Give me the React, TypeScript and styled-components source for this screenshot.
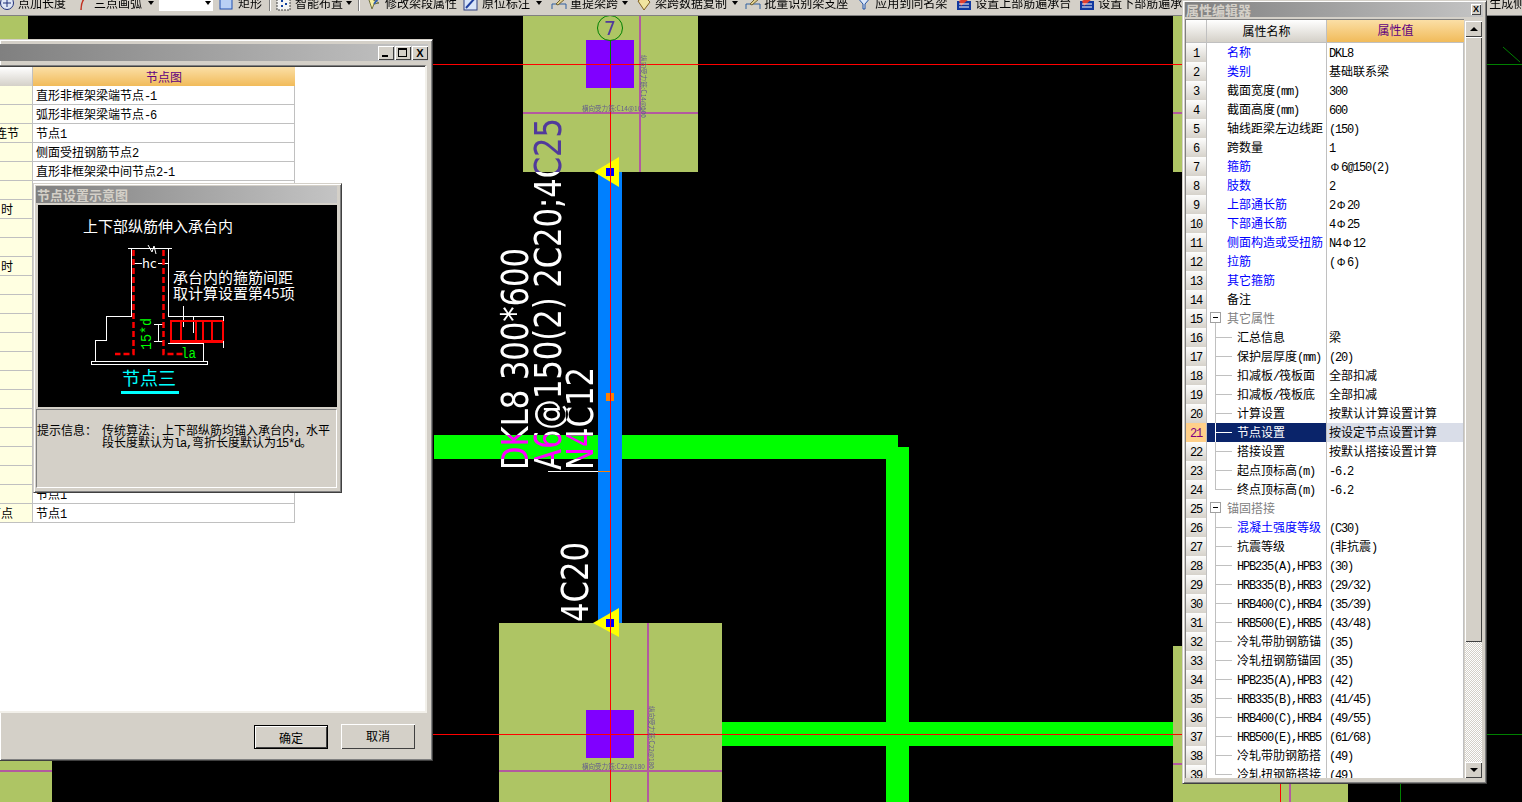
import React from 'react'
import styled, { createGlobalStyle } from 'styled-components'

const CJK = '"Noto Sans CJK SC", "Liberation Sans", sans-serif'
const FACE = '#d4d0c8'
const GRID = '#c0c0c0'

const GlobalStyle = createGlobalStyle`
    html, body {
        margin: 0;
        padding: 0;
        background: #000;
        overflow: hidden;
    }
    * {
        box-sizing: border-box;
    }
`

const Screen = styled.div`
    position: relative;
    width: 1522px;
    height: 802px;
    overflow: hidden;
    background: #000;
    font: 12px/18px ${CJK};
    color: #000;
`

/* ---------- text helper: half width latin runs like the bitmap font ---------- */

const Latin = styled.span`
    font-family: "Liberation Mono", monospace;
    font-size: 12px;
    letter-spacing: -1.2px;
`

const RebarMark = styled.span`
    display: inline-block;
    width: 12px;
    text-align: center;
    font-family: "Liberation Sans", sans-serif;
    font-size: 11px;
`

function mixed(text: string) {
    const runs = text.match(/[\x00-\x7f]+|Φ|[^\x00-\x7fΦ]+/g) || []
    return runs.map((run, i) => {
        if (run === 'Φ') return <RebarMark key={i}>Φ</RebarMark>
        if (/^[\x00-\x7f]/.test(run)) return <Latin key={i}>{run}</Latin>
        return <span key={i}>{run}</span>
    })
}

/* ---------- toolbar ---------- */

const Toolbar = styled.div`
    position: absolute;
    top: 0;
    left: 0;
    width: 1522px;
    height: 16px;
    background: ${FACE};
    border-bottom: 1px solid #808080;
    overflow: hidden;
`

const ToolRow = styled.div`
    display: flex;
    align-items: center;
    height: 17px;
    margin-top: -6px;
    white-space: nowrap;
`

const ToolItem = styled.div<{ $gap: number }>`
    display: flex;
    align-items: center;
    flex: none;
    margin-left: ${({ $gap }) => $gap}px;
`

const ToolLabel = styled.span`
    margin-left: 3px;
`

const ToolArrow = styled.span<{ $gap: number }>`
    flex: none;
    width: 0;
    height: 0;
    margin-left: ${({ $gap }) => $gap + 1}px;
    margin-right: 1px;
    border-left: 3px solid transparent;
    border-right: 3px solid transparent;
    border-top: 4px solid #000;
`

const ToolSep = styled.div<{ $gap: number }>`
    flex: none;
    width: 2px;
    height: 17px;
    margin-left: ${({ $gap }) => $gap}px;
    border-left: 1px solid #808080;
    border-right: 1px solid #fff;
`

const ToolCombo = styled.div`
    flex: none;
    position: relative;
    width: 54px;
    height: 17px;
    margin-left: 4px;
    background: #fff;
    &::after {
        content: '';
        position: absolute;
        right: 2px;
        top: 7px;
        border-left: 3px solid transparent;
        border-right: 3px solid transparent;
        border-top: 4px solid #000;
    }
`

function ToolIcon({ kind }: { kind: string }) {
    const body: Record<string, React.ReactNode> = {
        plus: (
            <>
                <circle cx="8" cy="8" r="6.5" fill="#dfe6f5" stroke="#20307a" />
                <path d="M8 4v8M4 8h8" stroke="#20307a" />
            </>
        ),
        arc: <path d="M11 2C7 5 6 9 6 15" fill="none" stroke="#c03020" strokeWidth="1.5" />,
        rect: <rect x="1" y="2" width="12" height="12" fill="#b8d0f4" stroke="#2050b0" />,
        grid: (
            <>
                <rect x="1" y="2" width="13" height="13" fill="#f4f4f4" stroke="#404040" strokeDasharray="2 1" />
                <path d="M5 5h2v2H5zM9 8h2v2H9zM5 10h2v2H5z" fill="#1040a0" />
            </>
        ),
        pencil: (
            <>
                <path d="M2 2l4 12 2-5 5-1z" fill="#f8f0a0" stroke="#707040" />
                <path d="M8 9l6-8" stroke="#3060b0" strokeWidth="2" />
            </>
        ),
        mark: (
            <>
                <rect x="1" y="2" width="13" height="13" fill="#d8e4f8" stroke="#304080" />
                <path d="M3 13l9-10" stroke="#2040a0" strokeWidth="2" />
            </>
        ),
        span: (
            <>
                <path d="M1 14V9h14v5" fill="none" stroke="#3060a0" />
                <path d="M5 9l7-7 2 2-7 6z" fill="#e0d090" stroke="#706030" />
            </>
        ),
        copy: <path d="M2 6l6-5 6 6-6 8z" fill="#f0e4a0" stroke="#806020" />,
        funnel: (
            <>
                <path d="M1 2h14l-6 7v5H7V9z" fill="#dce8fa" stroke="#2050a0" />
                <path d="M5 4h6" stroke="#fff" />
            </>
        ),
        rebar: (
            <>
                <rect x="1" y="6" width="14" height="9" fill="#1038a0" />
                <path d="M3 6l9-5 2 2-9 8z" fill="#e04030" />
                <path d="M3 9h10M3 12h10" stroke="#fff" />
            </>
        ),
    }
    return (
        <svg width="16" height="16" viewBox="0 0 16 16" style={{ flex: 'none' }}>
            {body[kind]}
        </svg>
    )
}

type ToolDef = { gap: number; icon: string; label: string; arrow?: number }

const TOOLS_A: ToolDef[] = [
    { gap: -1, icon: 'plus', label: '点加长度' },
    { gap: 9, icon: 'arc', label: '三点画弧', arrow: 5 },
]
const TOOLS_D: ToolDef[] = [
    { gap: 6, icon: 'pencil', label: '修改梁段属性' },
    { gap: 6, icon: 'mark', label: '原位标注', arrow: 5 },
    { gap: 8, icon: 'span', label: '重提梁跨', arrow: 3 },
    { gap: 7, icon: 'copy', label: '梁跨数据复制', arrow: 4 },
    { gap: 6, icon: 'span', label: '批量识别梁支座' },
    { gap: 8, icon: 'funnel', label: '应用到同名梁' },
    { gap: 9, icon: 'rebar', label: '设置上部筋遍承台' },
    { gap: 8, icon: 'rebar', label: '设置下部筋遍承台' },
]

function renderTools(list: ToolDef[]) {
    return list.map(t => (
        <ToolItem $gap={t.gap} key={t.label}>
            <ToolIcon kind={t.icon} />
            <ToolLabel>{t.label}</ToolLabel>
            {t.arrow !== undefined && <ToolArrow $gap={t.arrow} />}
        </ToolItem>
    ))
}

function TopToolbar() {
    return (
        <Toolbar>
            <ToolRow>
                {renderTools(TOOLS_A)}
                <ToolCombo />
                <ToolItem $gap={6}>
                    <ToolIcon kind="rect" />
                    <ToolLabel>矩形</ToolLabel>
                </ToolItem>
                <ToolSep $gap={7} />
                <ToolItem $gap={5}>
                    <ToolIcon kind="grid" />
                    <ToolLabel>智能布置</ToolLabel>
                    <ToolArrow $gap={2} />
                </ToolItem>
                <ToolSep $gap={5} />
                {renderTools(TOOLS_D)}
                <ToolItem $gap={295}>
                    <span>生成侧面筋</span>
                </ToolItem>
            </ToolRow>
        </Toolbar>
    )
}

/* ---------- CAD canvas ---------- */

const CadSvg = styled.svg`
    position: absolute;
    left: 0;
    top: 0;
    display: block;
`

const InvertText = styled.text`
    font-family: "DejaVu Sans", sans-serif;
    font-size: 37px;
    fill: #fff;
    mix-blend-mode: difference;
`

const InvertLine = styled.rect`
    fill: #fff;
    mix-blend-mode: difference;
`

const TinyText = styled.text`
    font-family: ${CJK};
    font-size: 7px;
    fill: #66608c;
`

const PAD = '#aec564'
const PURPLE_LINE = '#b35aa0'
const COLUMN = '#8000ff'
const GREEN = '#00ff00'
const DARK_GREEN = '#008000'

function Canvas() {
    return (
        <CadSvg width="1522" height="802" viewBox="0 0 1522 802" shapeRendering="crispEdges">
            {/* pads */}
            <rect x="0" y="16" width="28" height="40" fill={PAD} />
            <rect x="0" y="640" width="52" height="162" fill={PAD} />
            <rect x="0" y="770" width="52" height="2" fill={PURPLE_LINE} />
            <rect x="523" y="16" width="175" height="156" fill={PAD} />
            <rect x="499" y="623" width="223" height="179" fill={PAD} />
            <rect x="1173" y="16" width="60" height="156" fill={PAD} />
            <rect x="1173" y="646" width="175" height="156" fill={PAD} />

            {/* pad axes */}
            <rect x="523" y="112" width="175" height="2" fill={PURPLE_LINE} />
            <rect x="639" y="16" width="2" height="156" fill={PURPLE_LINE} />
            <rect x="499" y="770" width="223" height="2" fill={PURPLE_LINE} />
            <rect x="647" y="623" width="2" height="179" fill={PURPLE_LINE} />
            <rect x="1173" y="112" width="60" height="2" fill={PURPLE_LINE} />
            <rect x="1173" y="763" width="175" height="2" fill={PURPLE_LINE} />
            <rect x="1289" y="646" width="2" height="156" fill={PURPLE_LINE} />

            {/* columns */}
            <rect x="586" y="40" width="48" height="48" fill={COLUMN} />
            <rect x="586" y="710" width="48" height="48" fill={COLUMN} />

            {/* green beams */}
            <rect x="434" y="435" width="464" height="24" fill={GREEN} />
            <rect x="886" y="447" width="23" height="355" fill={GREEN} />
            <rect x="722" y="722" width="451" height="24" fill={GREEN} />

            {/* selected beam */}
            <rect x="598" y="172" width="24" height="451" fill="#0080ff" />

            {/* grips */}
            <path d="M594 172L619 157V187Z" fill="#ffff00" shapeRendering="auto" />
            <path d="M593 623L619 608V637Z" fill="#ffff00" shapeRendering="auto" />
            <rect x="606" y="168" width="8" height="8" fill="#0000ff" />
            <rect x="606" y="619" width="8" height="8" fill="#0000ff" />
            <rect x="606" y="393" width="8" height="8" fill="#ff7f00" />

            {/* axis lines */}
            <rect x="610" y="64" width="1" height="738" fill="#ff0000" />
            <rect x="432" y="64" width="750" height="1" fill="#ff0000" />
            <rect x="432" y="734" width="750" height="1" fill="#ff0000" />
            <rect x="1280" y="782" width="1" height="20" fill="#ff0000" />
            <rect x="610" y="40" width="1" height="24" fill={DARK_GREEN} />

            {/* thin layer on the right */}
            <rect x="1487" y="64" width="35" height="1" fill={DARK_GREEN} />
            <rect x="1487" y="734" width="35" height="1" fill={DARK_GREEN} />
            <rect x="1400" y="782" width="1" height="20" fill={DARK_GREEN} />
            <path d="M1503 47L1520 62" stroke={DARK_GREEN} fill="none" shapeRendering="auto" />

            {/* axis bubble */}
            <circle cx="610" cy="28" r="12.5" fill="none" stroke={DARK_GREEN} shapeRendering="auto" />
            <InvertText x="604" y="35" style={{ fontSize: 19 }} textLength="12" lengthAdjust="spacingAndGlyphs">
                7
            </InvertText>

            {/* pad notes */}
            <TinyText x="582" y="111" textLength="63" lengthAdjust="spacingAndGlyphs">
                横向受力筋:C14@100
            </TinyText>
            <TinyText transform="translate(641 55) rotate(90)" textLength="63" lengthAdjust="spacingAndGlyphs">
                纵向受力筋:C14@100
            </TinyText>
            <TinyText x="582" y="769" textLength="63" lengthAdjust="spacingAndGlyphs">
                横向受力筋:C22@180
            </TinyText>
            <TinyText transform="translate(649 706) rotate(90)" textLength="63" lengthAdjust="spacingAndGlyphs">
                纵向受力筋:C22@180
            </TinyText>

            {/* beam annotation */}
            <InvertLine x="548" y="471" width="62" height="1" />
            <InvertText transform="translate(528 470) rotate(-90)" textLength="222" lengthAdjust="spacingAndGlyphs">
                DKL8 300*600
            </InvertText>
            <InvertText transform="translate(561 470) rotate(-90)" textLength="352" lengthAdjust="spacingAndGlyphs">
                A6@150(2) 2C20;4C25
            </InvertText>
            <InvertText transform="translate(593 470) rotate(-90)" textLength="103" lengthAdjust="spacingAndGlyphs">
                N4C12
            </InvertText>
            <InvertText transform="translate(588 622) rotate(-90)" textLength="80" lengthAdjust="spacingAndGlyphs">
                4C20
            </InvertText>
        </CadSvg>
    )
}

/* ---------- window chrome ---------- */

const Win = styled.div`
    background: ${FACE};
    border-top: 1px solid ${FACE};
    border-left: 1px solid ${FACE};
    border-right: 1px solid #404040;
    border-bottom: 1px solid #404040;
    box-shadow: inset 1px 1px 0 #fff, inset -1px -1px 0 #808080;
    display: flex;
    flex-direction: column;
`

const TitleBar = styled.div`
    flex: none;
    display: flex;
    align-items: center;
    justify-content: space-between;
    height: 17px;
    padding: 0 1px;
    background: linear-gradient(to right, #808080, #c4c4c4);
    color: ${FACE};
    font-weight: 700;
    font-size: 13px;
    line-height: 17px;
`

const DialogTitle = styled(TitleBar)`
    padding: 0;
`

const PropTitle = styled(TitleBar)`
    height: 15px;
    line-height: 15px;
    padding: 0 3px 0 1px;
`

const CaptionButtons = styled.div`
    display: flex;
    margin-left: auto;
`

const CaptionButton = styled.div<{ $gap?: number }>`
    width: 16px;
    height: 14px;
    margin-left: ${({ $gap }) => $gap || 0}px;
    background: ${FACE};
    box-shadow: inset 1px 1px 0 #fff, inset -1px -1px 0 #404040;
    color: #000;
    font: 700 11px/14px "Liberation Sans", sans-serif;
    text-align: center;
`

const MinGlyph = styled.span`
    display: block;
    width: 6px;
    height: 2px;
    margin: 9px 0 0 4px;
    background: #000;
`

const MaxGlyph = styled.span`
    display: block;
    width: 9px;
    height: 9px;
    margin: 2px 0 0 3px;
    border: 1px solid #000;
    border-top-width: 2px;
`

/* ---------- node settings dialog ---------- */

const NodeDialog = styled(Win)`
    position: absolute;
    left: 0;
    top: 39px;
    width: 433px;
    height: 722px;
    border-left: none;
    padding: 4px 4px 0 0;
`

const NodeBody = styled.div`
    flex: none;
    width: 427px;
    height: 648px;
    margin-top: 4px;
    background: #fff;
    border-top: 1px solid #808080;
    border-right: 2px solid #f2f0ea;
    border-bottom: 2px solid #f2f0ea;
    box-shadow: inset 0 1px 0 #404040;
    padding-top: 1px;
`

const NodeGrid = styled.div`
    width: 295px;
`

const NodeRow = styled.div`
    display: grid;
    grid-template-columns: 33px 262px;
    height: 19px;
`

const NodeSide = styled.div<{ $inset?: number }>`
    display: flex;
    justify-content: flex-end;
    padding-right: ${({ $inset }) => $inset || 0}px;
    background: #ffffe1;
    border-right: 1px solid ${GRID};
    border-bottom: 1px solid ${GRID};
    white-space: nowrap;
    overflow: hidden;
`

const NodeSideHead = styled.div`
    background: linear-gradient(#fff, ${FACE});
    border-right: 1px solid ${GRID};
`

const NodeValue = styled.div`
    padding-left: 3px;
    border-right: 1px solid ${GRID};
    border-bottom: 1px solid ${GRID};
    white-space: nowrap;
    overflow: hidden;
`

const OrangeHead = styled.div`
    background: linear-gradient(#fbdfa6, #f1bb5a);
    color: #600080;
    text-align: center;
    line-height: 19px;
`

const Footer = styled.div`
    flex: 1;
    display: flex;
    align-items: center;
    justify-content: flex-end;
    gap: 13px;
    padding-right: 13px;
`

const DialogButton = styled.div<{ $default?: boolean }>`
    width: 74px;
    height: ${({ $default }) => ($default ? 24 : 25)}px;
    background: ${FACE};
    border: ${({ $default }) => ($default ? '1px solid #000' : 'none')};
    box-shadow: inset 1px 1px 0 #fff, inset -1px -1px 0 #404040;
    line-height: 24px;
    text-align: center;
`

const NODE_VALUES = [
    '直形非框架梁端节点-1',
    '弧形非框架梁端节点-6',
    '节点1',
    '侧面受扭钢筋节点2',
    '直形非框架梁中间节点2-1',
]

const NODE_SIDES: Record<number, { text: string; inset: number }> = {
    2: { text: '连节', inset: 13 },
    6: { text: '时', inset: 19 },
    9: { text: '时', inset: 19 },
    22: { text: '节点', inset: 19 },
}

function NodeSettings() {
    return (
        <NodeDialog>
            <DialogTitle>
                <CaptionButtons>
                    <CaptionButton>
                        <MinGlyph />
                    </CaptionButton>
                    <CaptionButton $gap={1}>
                        <MaxGlyph />
                    </CaptionButton>
                    <CaptionButton $gap={1}>X</CaptionButton>
                </CaptionButtons>
            </DialogTitle>
            <NodeBody>
                <NodeGrid>
                    <NodeRow>
                        <NodeSideHead />
                        <OrangeHead>节点图</OrangeHead>
                    </NodeRow>
                    {Array.from({ length: 23 }, (_, i) => (
                        <NodeRow key={i}>
                            <NodeSide $inset={NODE_SIDES[i] ? NODE_SIDES[i].inset : 0}>
                                {NODE_SIDES[i] ? NODE_SIDES[i].text : ''}
                            </NodeSide>
                            <NodeValue>{mixed(NODE_VALUES[i] || '节点1')}</NodeValue>
                        </NodeRow>
                    ))}
                </NodeGrid>
            </NodeBody>
            <Footer>
                <DialogButton $default>确定</DialogButton>
                <DialogButton>取消</DialogButton>
            </Footer>
        </NodeDialog>
    )
}

/* ---------- node sketch window ---------- */

const SketchWindow = styled(Win)`
    position: absolute;
    left: 33px;
    top: 183px;
    width: 309px;
    height: 310px;
    padding: 2px 4px 4px 2px;
`

const SketchPicture = styled.div`
    flex: none;
    width: 299px;
    height: 202px;
    margin: 2px 0 0 2px;
    background: #000;
`

const SketchSvg = styled.svg`
    display: block;
`

const SketchText = styled.text<{ $size?: number }>`
    font-family: ${CJK};
    font-size: ${({ $size }) => $size || 15}px;
    fill: #fff;
`

const SketchLatin = styled.text`
    font-family: "Liberation Mono", monospace;
    font-size: 14px;
    fill: #00ff00;
`

const HintPanel = styled.div`
    flex: 1;
    display: flex;
    margin-top: 2px;
    padding: 14px 0 0 0;
    border: 1px solid #808080;
    border-right-color: #fff;
    border-bottom-color: #fff;
    line-height: 12px;
`

const HintLabel = styled.div`
    flex: none;
    width: 65px;
`

const HintBody = styled.div`
    width: 232px;
`

function NodeSketch() {
    const white = '#fff'
    const red = '#ff0000'
    return (
        <SketchWindow>
            <TitleBar>节点设置示意图</TitleBar>
            <SketchPicture>
                <SketchSvg width="299" height="202" viewBox="38 205 299 202">
                    <SketchText x="83" y="232">
                        上下部纵筋伸入承台内
                    </SketchText>
                    <g fill="none" stroke={white} shapeRendering="crispEdges">
                        <path d="M128 248.5H172M131.5 248V316.5H106.5V340.5H95.5V362M168.5 248V316.5H223" />
                        <rect x="91.5" y="361.5" width="116" height="3" />
                        <path d="M203.5 341V361M168 343.5H203M183.5 306V327M193.5 316V333" />
                        <path d="M158.5 324V341M154 324H163M154 341H163M223.5 316V348M203 341H223" />
                        <path d="M134 263.5H142M158 263.5H168" />
                    </g>
                    <path d="M148 245L152 252L154 246L156 254" fill="none" stroke={white} />
                    <path d="M133.5 250V354H115M163.5 250V354H183" fill="none" stroke={red} strokeWidth="2.5" strokeDasharray="6 3" />
                    <g fill="none" stroke={red} shapeRendering="crispEdges">
                        <path d="M170 320.5H223" strokeWidth="2" />
                        <path d="M170 341H223" strokeWidth="3" />
                        <path d="M171 321V341M181 321V341M196 321V341M203 321V341M212 321V341M223 321V341" strokeWidth="2" />
                    </g>
                    <SketchText x="142" y="268" $size={13}>
                        hc
                    </SketchText>
                    <SketchText x="173" y="282.5">
                        承台内的箍筋间距
                    </SketchText>
                    <SketchText x="173" y="299">
                        取计算设置第45项
                    </SketchText>
                    <SketchLatin transform="translate(151 350) rotate(-90)" textLength="32" lengthAdjust="spacingAndGlyphs">
                        15*d
                    </SketchLatin>
                    <SketchLatin x="181" y="358" textLength="15" lengthAdjust="spacingAndGlyphs">
                        la
                    </SketchLatin>
                    <SketchText x="122" y="385" $size={18} style={{ fill: '#00ffff' }}>
                        节点三
                    </SketchText>
                    <rect x="121" y="391" width="58" height="3" fill="#00ffff" />
                </SketchSvg>
            </SketchPicture>
            <HintPanel>
                <HintLabel>{'提示信息\uFF1A'}</HintLabel>
                <HintBody>
                    {'传统算法\uFF1A上下部纵筋均锚入承台内\uFF0C水平'}
                    <br />
                    {mixed('段长度默认为la,弯折长度默认为15*d。')}
                </HintBody>
            </HintPanel>
        </SketchWindow>
    )
}

/* ---------- property editor ---------- */

const PropWindow = styled(Win)`
    position: absolute;
    left: 1182px;
    top: 0;
    width: 305px;
    height: 784px;
    padding: 1px 3px 3px 2px;
`

const CloseButton = styled.div`
    flex: none;
    width: 10px;
    height: 11px;
    margin-right: -1px;
    background: ${FACE};
    box-shadow: inset 1px 1px 0 #fff, inset -1px -1px 0 #404040;
    color: #000;
    font: 700 9px/11px "Liberation Sans", sans-serif;
    text-align: center;
`

const PropBody = styled.div`
    flex: none;
    display: flex;
    height: 759px;
    margin-top: 2px;
    gap: 1px;
`

const PropTable = styled.div`
    flex: none;
    width: 279px;
    height: 759px;
    background: #fff;
    border-left: 1px solid #808080;
    border-top: 1px solid #808080;
    overflow: hidden;
`

const PropHead = styled.div`
    display: grid;
    grid-template-columns: 21px 120px 137px;
    height: 23px;
    border-bottom: 1px solid ${GRID};
    line-height: 22px;
    text-align: center;
`

const HeadCell = styled.div`
    background: linear-gradient(#fff, ${FACE});
    border-right: 1px solid ${GRID};
`

const PropRow = styled.div`
    display: grid;
    grid-template-columns: 21px 120px 137px;
    height: 19px;
`

const IndexCell = styled.div<{ $on?: boolean }>`
    background: ${({ $on }) => ($on ? '#ffd08a' : `linear-gradient(#fdfdfc, ${FACE})`)};
    color: ${({ $on }) => ($on ? '#800080' : '#000')};
    border-bottom: 1px solid ${GRID};
    border-right: 1px solid ${GRID};
    text-align: center;
`

type Tree = 'top' | 'child' | 'last' | 'section'

const NameCell = styled.div<{ $tree: Tree; $on?: boolean; $tone: string }>`
    position: relative;
    padding-left: ${({ $tree }) => ($tree === 'child' || $tree === 'last' ? 30 : 20)}px;
    color: ${({ $tone, $on }) => ($on ? '#fff' : $tone)};
    background: ${({ $on }) => ($on ? '#0a246a' : '#fff')};
    border-bottom: 1px solid ${GRID};
    border-right: 1px solid ${GRID};
    white-space: nowrap;
    overflow: hidden;
    &::before {
        content: '';
        display: ${({ $tree }) => ($tree === 'top' ? 'none' : 'block')};
        position: absolute;
        left: 8px;
        top: ${({ $tree }) => ($tree === 'section' ? 13 : 0)}px;
        height: ${({ $tree }) => ($tree === 'last' ? 9 : 19)}px;
        border-left: 1px solid ${({ $on }) => ($on ? '#fff' : GRID)};
    }
    &::after {
        content: '';
        display: ${({ $tree }) => ($tree === 'child' || $tree === 'last' ? 'block' : 'none')};
        position: absolute;
        left: 8px;
        top: 9px;
        width: 17px;
        border-top: 1px solid ${({ $on }) => ($on ? '#fff' : GRID)};
    }
`

const Expander = styled.span`
    position: absolute;
    left: 3px;
    top: 3px;
    width: 11px;
    height: 11px;
    background: #fff;
    border: 1px solid #a0a0a0;
    &::after {
        content: '';
        position: absolute;
        left: 2px;
        top: 4px;
        width: 5px;
        height: 1px;
        background: #000;
    }
`

const ValueCell = styled.div<{ $on?: boolean }>`
    padding-left: 2px;
    background: ${({ $on }) => ($on ? '#d9dde8' : '#fff')};
    border-bottom: 1px solid ${GRID};
    border-right: 1px solid ${GRID};
    white-space: nowrap;
    overflow: hidden;
`

const ScrollBar = styled.div`
    flex: none;
    display: flex;
    flex-direction: column;
    width: 17px;
    height: 759px;
    padding-top: 2px;
`

const ScrollButton = styled.div<{ $down?: boolean }>`
    flex: none;
    display: flex;
    align-items: center;
    justify-content: center;
    height: 16px;
    background: ${FACE};
    box-shadow: inset 1px 1px 0 #fff, inset -1px -1px 0 #404040;
    &::after {
        content: '';
        border-left: 4px solid transparent;
        border-right: 4px solid transparent;
        ${({ $down }) => ($down ? 'border-top: 4px solid #000;' : 'border-bottom: 4px solid #000;')}
    }
`

const ScrollThumb = styled.div`
    flex: none;
    height: 605px;
    background: ${FACE};
    box-shadow: inset 1px 1px 0 #fff, inset -1px -1px 0 #404040;
`

const ScrollTrack = styled.div`
    flex: 1;
    background: repeating-conic-gradient(#fff 0 25%, ${FACE} 0 50%) 0 0 / 2px 2px;
`

const BLUE = '#0000ff'
const BLACK = '#000'
const GRAY = '#808080'

type PropDef = [string, string, string?, Tree?]

const PROPS: PropDef[] = [
    ['名称', 'DKL8', BLUE],
    ['类别', '基础联系梁', BLUE],
    ['截面宽度(mm)', '300'],
    ['截面高度(mm)', '600'],
    ['轴线距梁左边线距', ' (150)'],
    ['跨数量', '1'],
    ['箍筋', ' Φ6@150(2)', BLUE],
    ['肢数', '2', BLUE],
    ['上部通长筋', '2Φ20', BLUE],
    ['下部通长筋', '4Φ25', BLUE],
    ['侧面构造或受扭筋', 'N4Φ12', BLUE],
    ['拉筋', ' (Φ6)', BLUE],
    ['其它箍筋', '', BLUE],
    ['备注', ''],
    ['其它属性', '', GRAY, 'section'],
    ['汇总信息', '梁', BLACK, 'child'],
    ['保护层厚度(mm)', '(20)', BLACK, 'child'],
    ['扣减板/筏板面', '全部扣减', BLACK, 'child'],
    ['扣减板/筏板底', '全部扣减', BLACK, 'child'],
    ['计算设置', '按默认计算设置计算', BLACK, 'child'],
    ['节点设置', '按设定节点设置计算', BLACK, 'child'],
    ['搭接设置', '按默认搭接设置计算', BLACK, 'child'],
    ['起点顶标高(m)', '-6.2', BLACK, 'child'],
    ['终点顶标高(m)', '-6.2', BLACK, 'last'],
    ['锚固搭接', '', GRAY, 'section'],
    ['混凝土强度等级', '(C30)', BLUE, 'child'],
    ['抗震等级', '(非抗震)', BLACK, 'child'],
    ['HPB235(A),HPB3', '(30)', BLACK, 'child'],
    ['HRB335(B),HRB3', '(29/32)', BLACK, 'child'],
    ['HRB400(C),HRB4', '(35/39)', BLACK, 'child'],
    ['HRB500(E),HRB5', '(43/48)', BLACK, 'child'],
    ['冷轧带肋钢筋锚', '(35)', BLACK, 'child'],
    ['冷轧扭钢筋锚固', '(35)', BLACK, 'child'],
    ['HPB235(A),HPB3', '(42)', BLACK, 'child'],
    ['HRB335(B),HRB3', '(41/45)', BLACK, 'child'],
    ['HRB400(C),HRB4', '(49/55)', BLACK, 'child'],
    ['HRB500(E),HRB5', '(61/68)', BLACK, 'child'],
    ['冷轧带肋钢筋搭', '(49)', BLACK, 'child'],
    ['冷轧扭钢筋搭接', '(49)', BLACK, 'last'],
]

function PropertyEditor() {
    return (
        <PropWindow>
            <PropTitle>
                属性编辑器
                <CloseButton>X</CloseButton>
            </PropTitle>
            <PropBody>
                <PropTable>
                    <PropHead>
                        <HeadCell />
                        <HeadCell>属性名称</HeadCell>
                        <OrangeHead>属性值</OrangeHead>
                    </PropHead>
                    {PROPS.map(([name, value, tone, tree], i) => {
                        const on = i === 20
                        return (
                            <PropRow key={i}>
                                <IndexCell $on={on}>{mixed(String(i + 1))}</IndexCell>
                                <NameCell $tree={tree || 'top'} $tone={tone || BLACK} $on={on}>
                                    {tree === 'section' && <Expander />}
                                    {mixed(name)}
                                </NameCell>
                                <ValueCell $on={on}>{mixed(value)}</ValueCell>
                            </PropRow>
                        )
                    })}
                </PropTable>
                <ScrollBar>
                    <ScrollButton />
                    <ScrollThumb />
                    <ScrollTrack />
                    <ScrollButton $down />
                </ScrollBar>
            </PropBody>
        </PropWindow>
    )
}

export default function App() {
    return (
        <Screen>
            <GlobalStyle />
            <Canvas />
            <TopToolbar />
            <NodeSettings />
            <NodeSketch />
            <PropertyEditor />
        </Screen>
    )
}
